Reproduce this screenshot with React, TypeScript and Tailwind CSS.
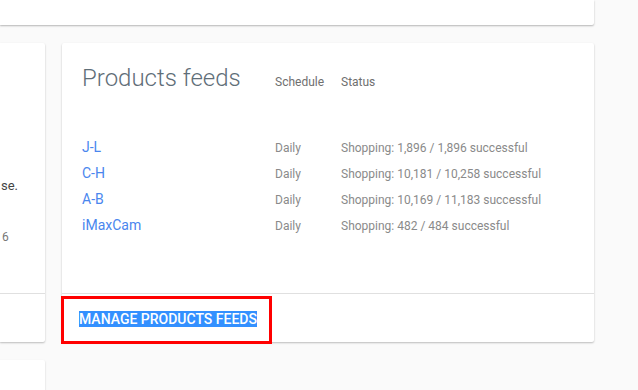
import React from "react";

const rows = [
  { name: "J-L", status: "Shopping: 1,896 / 1,896 successful" },
  { name: "C-H", status: "Shopping: 10,181 / 10,258 successful" },
  { name: "A-B", status: "Shopping: 10,169 / 11,183 successful" },
  { name: "iMaxCam", status: "Shopping: 482 / 484 successful" },
];

export default function App() {
  return (
    <div
      className="relative w-[638px] h-[390px] overflow-hidden bg-[#fafafa]"
      style={{ fontFamily: "Roboto, 'Liberation Sans', sans-serif" }}
    >
      {/* top card */}
      <div className="w-[594px] h-[25px] bg-white rounded-br-[2px] shadow-[0_1px_2px_rgba(0,0,0,0.28)]" />

      <div className="flex mt-[18px]">
        {/* left column */}
        <div className="flex flex-col w-[45px]">
          <div className="w-[45px] h-[299px] bg-white rounded-r-[2px] shadow-[0_1px_2px_rgba(0,0,0,0.25)] flex flex-col overflow-hidden">
            <div className="h-[251px] border-b border-[#e0e0e0] flex flex-col">
              <div className="mt-[135px] text-[13px] leading-[16px] text-[#444] pl-[1px] whitespace-nowrap">
                se.
              </div>
              <div className="mt-[36px] text-[12px] leading-[14px] text-[#777] pl-[2px]">6</div>
            </div>
          </div>
          <div className="mt-[18px] w-[45px] h-[40px] bg-white rounded-tr-[2px] shadow-[0_1px_2px_rgba(0,0,0,0.2)]" />
        </div>

        {/* products feeds card */}
        <div className="ml-[17px] w-[532px] h-[299px] bg-white rounded-[2px] shadow-[0_1px_2px_rgba(0,0,0,0.25)] flex flex-col">
          <div className="h-[251px] border-b border-[#e0e0e0] pl-[20px] flex flex-col">
            <div className="flex items-baseline pt-[21px]">
              <div className="w-[193px] text-[24px] leading-[28px] font-light text-[#5f6e78]">
                Products feeds
              </div>
              <div className="w-[66px] text-[12px] text-[#6f6f6f]">Schedule</div>
              <div className="text-[12px] text-[#6f6f6f]">Status</div>
            </div>
            <div className="mt-[42px] flex flex-col">
              {rows.map((r) => (
                <div key={r.name} className="flex items-baseline h-[26px] leading-[26px]">
                  <div className="w-[193px] text-[14px] text-[#4a86ee]">{r.name}</div>
                  <div className="w-[66px] text-[12px] text-[#8a8a8a]">Daily</div>
                  <div className="text-[12px] text-[#8a8a8a]">{r.status}</div>
                </div>
              ))}
            </div>
          </div>
          <div className="h-[48px] flex items-center pl-[17px] pt-[2px]">
            <span className="text-[14px] leading-[16px] font-medium text-white bg-[#3390ff]">
              MANAGE PRODUCTS FEEDS
            </span>
          </div>
        </div>
      </div>

      {/* annotation box */}
      <div className="absolute left-[61px] top-[296px] w-[211px] h-[48px] border-[3px] border-[#ff0000]" />
    </div>
  );
}
